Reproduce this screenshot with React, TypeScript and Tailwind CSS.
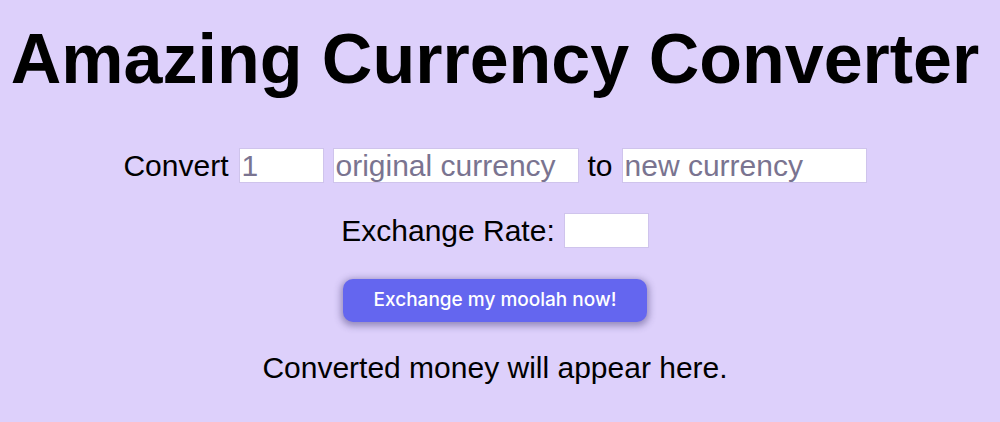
import { useState } from "react";

export default function App() {
  const [amount, setAmount] = useState("");
  const [from, setFrom] = useState("");
  const [to, setTo] = useState("");
  const [rate, setRate] = useState("");

  const inputCls =
    "h-[35px] border border-[#cfc4ec] bg-white px-[2px] text-[30px] leading-[33px] text-black placeholder:text-[#7a7490] outline-none";

  return (
    <div className="flex min-h-[422px] w-full flex-col items-center bg-[#ddd0fb] pr-[10px] font-['Liberation_Sans',Arial,sans-serif] text-black">
      <h1 className="mt-[17px] text-[70px] font-bold leading-[84px]">
        Amazing Currency Converter
      </h1>

      <div className="mt-[47px] flex items-center text-[30px] leading-[35px]">
        <span className="mr-[10px]">Convert</span>
        <input
          className={`${inputCls} w-[85px]`}
          placeholder="1"
          value={amount}
          onChange={(e) => setAmount(e.target.value)}
        />
        <input
          className={`${inputCls} ml-[9px] w-[246px]`}
          placeholder="original currency"
          value={from}
          onChange={(e) => setFrom(e.target.value)}
        />
        <span className="ml-[9px] mr-[9px]">to</span>
        <input
          className={`${inputCls} w-[245px]`}
          placeholder="new currency"
          value={to}
          onChange={(e) => setTo(e.target.value)}
        />
      </div>

      <div className="mt-[30px] flex items-center text-[30px] leading-[35px]">
        <span className="mr-[9px]">Exchange Rate:</span>
        <input
          className={`${inputCls} w-[85px]`}
          value={rate}
          onChange={(e) => setRate(e.target.value)}
        />
      </div>

      <button className="mt-[31px] h-[43px] w-[304px] rounded-[10px] bg-[#6466ef] font-['Inter',sans-serif] text-[19px] font-medium text-white shadow-[0_2px_7px_2px_rgba(60,50,110,0.45)]">
        Exchange my moolah now!
      </button>

      <p className="mt-[28px] text-[30px] leading-[35px]">
        Converted money will appear here.
      </p>
    </div>
  );
}
